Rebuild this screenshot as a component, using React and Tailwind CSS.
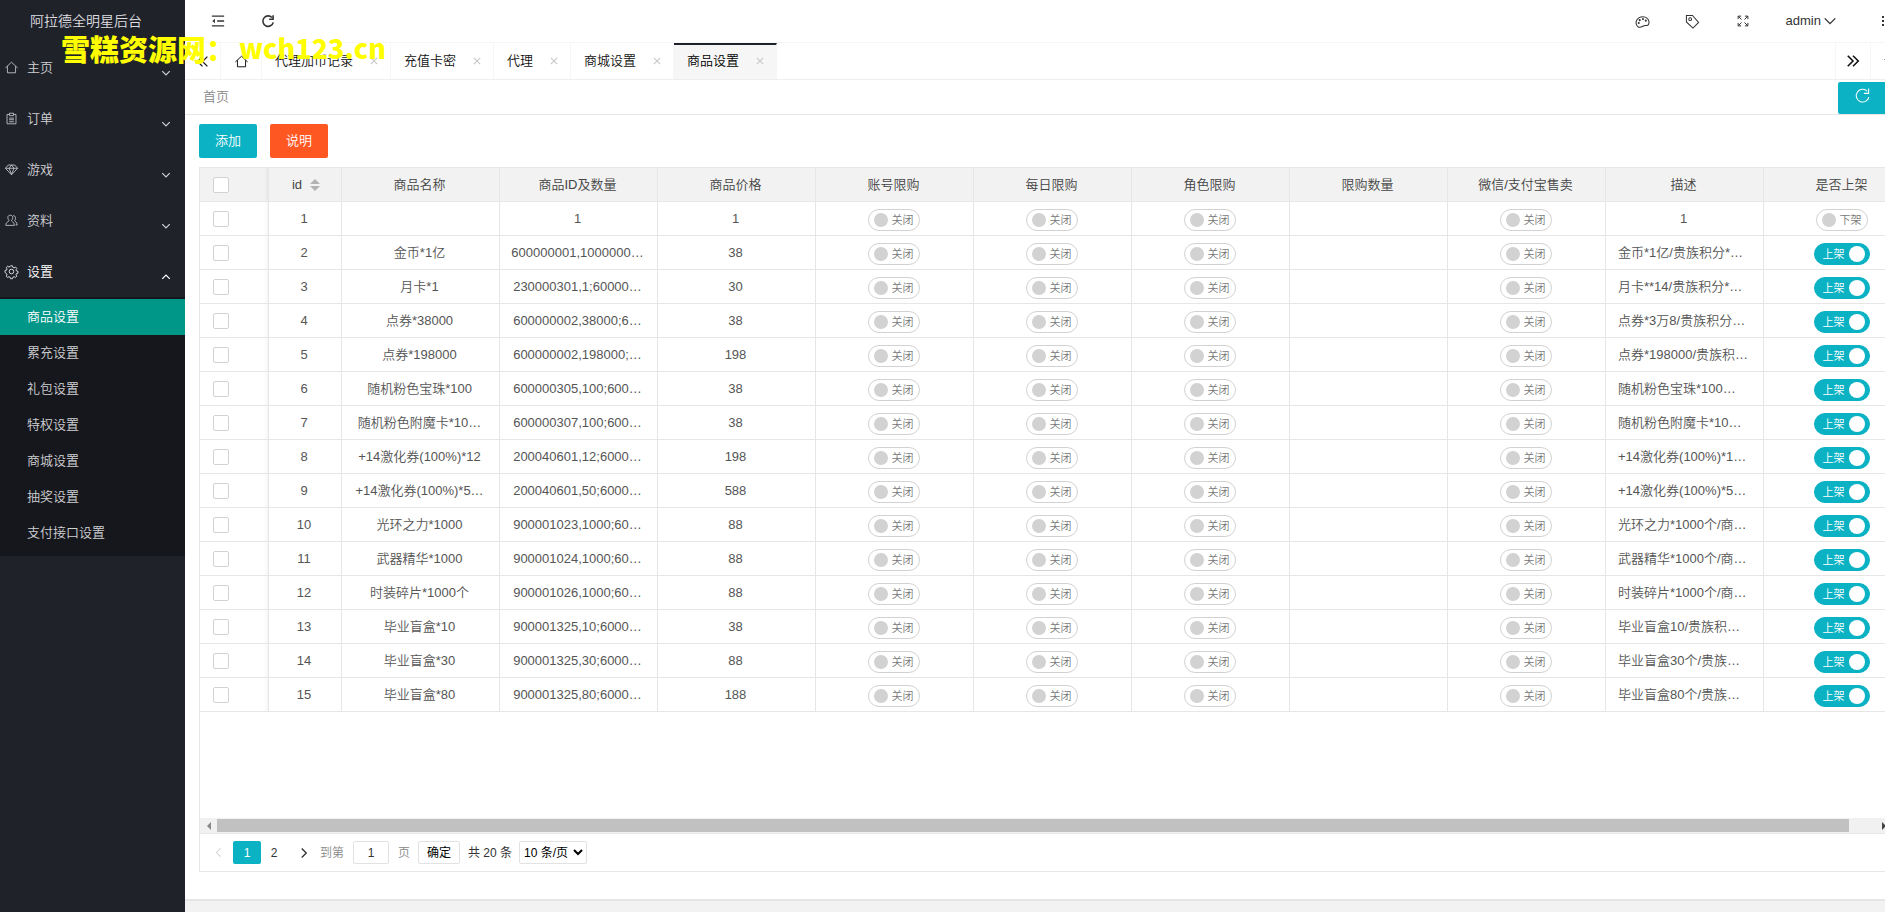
import { useState } from 'react';

const menu = [
  { label: '主页', icon: 'home' },
  { label: '订单', icon: 'order' },
  { label: '游戏', icon: 'gem' },
  { label: '资料', icon: 'users' },
  { label: '设置', icon: 'gear', open: true },
];

const subMenu = ['商品设置', '累充设置', '礼包设置', '特权设置', '商城设置', '抽奖设置', '支付接口设置'];

const tabs = ['代理加币记录', '充值卡密', '代理', '商城设置', '商品设置'];

const columns = [
  '商品名称', '商品ID及数量', '商品价格', '账号限购', '每日限购',
  '角色限购', '限购数量', '微信/支付宝售卖', '描述', '是否上架',
];

const goods = [
  { name: '', items: '1', price: 1, desc: '1', online: false },
  { name: '金币*1亿', items: '600000001,1000000…', price: 38, desc: '金币*1亿/贵族积分*…', online: true },
  { name: '月卡*1', items: '230000301,1;60000…', price: 30, desc: '月卡**14/贵族积分*…', online: true },
  { name: '点券*38000', items: '600000002,38000;6…', price: 38, desc: '点券*3万8/贵族积分…', online: true },
  { name: '点券*198000', items: '600000002,198000;…', price: 198, desc: '点券*198000/贵族积…', online: true },
  { name: '随机粉色宝珠*100', items: '600000305,100;600…', price: 38, desc: '随机粉色宝珠*100…', online: true },
  { name: '随机粉色附魔卡*10…', items: '600000307,100;600…', price: 38, desc: '随机粉色附魔卡*10…', online: true },
  { name: '+14激化券(100%)*12', items: '200040601,12;6000…', price: 198, desc: '+14激化券(100%)*1…', online: true },
  { name: '+14激化券(100%)*5…', items: '200040601,50;6000…', price: 588, desc: '+14激化券(100%)*5…', online: true },
  { name: '光环之力*1000', items: '900001023,1000;60…', price: 88, desc: '光环之力*1000个/商…', online: true },
  { name: '武器精华*1000', items: '900001024,1000;60…', price: 88, desc: '武器精华*1000个/商…', online: true },
  { name: '时装碎片*1000个', items: '900001026,1000;60…', price: 88, desc: '时装碎片*1000个/商…', online: true },
  { name: '毕业盲盒*10', items: '900001325,10;6000…', price: 38, desc: '毕业盲盒10/贵族积…', online: true },
  { name: '毕业盲盒*30', items: '900001325,30;6000…', price: 88, desc: '毕业盲盒30个/贵族…', online: true },
  { name: '毕业盲盒*80', items: '900001325,80;6000…', price: 188, desc: '毕业盲盒80个/贵族…', online: true },
];

const icons = {
  home: <path d="M.5 8.500 8 1.500l7.500 7M3 6.500v8h10v-8" />,
  order: <path d="M5 3H2.500v11.500h11V3H11M5.500 1.500h5v3h-5zM5 7.500h6M5 9.500h6M5 12h6" />,
  gem: <path d="M4 2.500h8L15.500 6.500 8 14.500.5 6.500zM.5 6.500h15M5 6.500 8 14l3-7.500M5 6.500l3-4 3 4" />,
  users: <path d="M6.500 1.500c-4 0-3.500 4.500-1.500 6.500 0 1.500-4 1.500-4 6h10.500c0-4.500-3.500-4.500-3.500-6 2-2 2.500-6.500-1.500-6.500zM10 2c3.500 0 3.500 4 2 6 0 1.500 3 1.500 3 5.500h-2" />,
  gear: (
    <>
      <circle cx="8" cy="8" r="2.800" />
      <path d="M6.800 1h2.400l.5 1.900 1.500.6 1.700-1 1.600 1.700-1 1.700.6 1.400 1.900.5v2.300l-1.900.5-.6 1.500 1 1.700-1.700 1.600-1.600-1-1.500.6-.5 1.900H6.800l-.5-1.900-1.500-.6-1.700 1-1.600-1.700 1-1.600-.6-1.500L0 9.200V6.800l1.900-.5.6-1.500-1-1.700 1.700-1.600 1.600 1 1.500-.6z" />
    </>
  ),
  down: <path d="m2 5 6 6 6-6" />,
  up: <path d="m2 11 6-6 6 6" />,
  left: <path d="M11 2 5 8l6 6" />,
  right: <path d="m5 2 6 6-6 6" />,
  first: <path d="M8 2 2 8l6 6M14 2 8 8l6 6" />,
  last: <path d="m2 2 6 6-6 6M8 2l6 6-6 6" />,
  close: <path d="m3 3 10 10M13 3 3 13" />,
  fold: (
    <>
      <path d="M1 2.500h14M7 8h8M1 13.500h14" />
      <path d="M4.500 5.500v5L1.500 8z" fill="currentColor" stroke="none" />
    </>
  ),
  reload: <path d="M14 9.500A6 6 0 1 1 12.500 4M13.800 1.500v4.500H9.300" />,
  palette: (
    <>
      <path d="M3 13.500c-4-4-1-10.500 5.500-10.500 5 0 7.500 4.500 6 8-1 2.500-3.500.5-5 1.500-1.500.8-4.500 3-6.500 1z" />
      <path d="M4 9.500v.1M5 6.500v.1M8.500 5.300v.1M11.500 7v.1" strokeWidth="2.200" strokeLinecap="round" />
    </>
  ),
  tag: (
    <>
      <path d="M1.500 1.500h6.500l6.500 7.500-6 6-7-6.500z" />
      <circle cx="5.500" cy="5.500" r="1.500" />
    </>
  ),
  full: <path d="M1.500 5.500v-4h4M1.500 1.500l4.500 4.500M10.500 1.500h4v4M14.500 1.500 10 6M1.500 10.500v4h4M1.500 14.500 6 10M14.500 10.500v4h-4M14.500 14.500 10 10" />,
};

const Icon = ({ name, size = 13, width = 1.2, className = '' }) => (
  <svg
    viewBox="0 0 16 16"
    width={size}
    height={size}
    fill="none"
    stroke="currentColor"
    strokeWidth={width}
    aria-hidden="true"
    className={`shrink-0 overflow-visible ${className}`}
  >
    {icons[name]}
  </svg>
);

const IconButton = ({ name, label, size, width, className = '' }) => (
  <button type="button" aria-label={label} className={`flex items-center justify-center ${className}`}>
    <Icon name={name} size={size} width={width} />
  </button>
);

const Switch = ({ label, on, off, defaultChecked = false }) => {
  const [checked, setChecked] = useState(defaultChecked);
  return (
    <label
      className={`relative mt-[3px] inline-flex h-[22px] cursor-pointer items-center rounded-full border align-middle text-[11px] ${
        checked
          ? 'w-14 justify-end gap-1 border-[#0bb2c4] bg-[#0bb2c4] pr-1 text-white'
          : 'w-[52px] gap-1 border-[#d2d2d2] bg-white pl-[5px] text-[#777]'
      }`}
    >
      <input
        type="checkbox"
        role="switch"
        aria-label={label}
        checked={checked}
        onChange={(e) => setChecked(e.target.checked)}
        className="sr-only"
      />
      {checked && <span>{on}</span>}
      <i className={`rounded-full ${checked ? 'size-4 bg-white' : 'size-[14px] bg-[#d2d2d2]'}`} />
      {!checked && <span>{off}</span>}
    </label>
  );
};

const Checkbox = ({ label }) => (
  <input
    type="checkbox"
    aria-label={label}
    className="block size-4 appearance-none rounded-xs border border-[#d2d2d2] bg-white checked:bg-[#0bb2c4]"
  />
);

const Sidebar = () => (
  <aside className="w-[185px] shrink-0 bg-[#20222a] text-[13px] text-[#cfd0d2]">
    <div className="flex h-[42px] items-center pl-[30px] text-sm text-[#dedee0]">阿拉德全明星后台</div>
    <nav>
      <ul>
        {menu.map((item) => (
          <li key={item.label}>
            <a href="#" className={`flex h-[51px] items-center pr-[14px] pl-[5px] ${item.open ? 'text-white' : ''}`}>
              <Icon name={item.icon} width={1} />
              <span className="ml-[9px] flex-1">{item.label}</span>
              <Icon name={item.open ? 'up' : 'down'} size={10} width={2} className="mt-[10px]" />
            </a>
            {item.open && (
              <ul className="bg-[#16171d] pt-[2px] pb-[5px]">
                {subMenu.map((sub, i) => (
                  <li key={sub}>
                    <a
                      href="#"
                      className={`flex h-9 items-center pl-[27px] ${i === 0 ? 'bg-[#009688] text-white' : 'text-[#cfd0d2]'}`}
                    >
                      {sub}
                    </a>
                  </li>
                ))}
              </ul>
            )}
          </li>
        ))}
      </ul>
    </nav>
  </aside>
);

const Header = () => (
  <header className="flex h-[43px] items-center border-b border-[#f6f6f6] pl-2 text-[13px] text-[#333]">
    <IconButton name="fold" label="侧边伸缩" size={14} width={1.5} className="w-[50px]" />
    <IconButton name="reload" label="刷新" size={14} width={1.8} className="w-[50px]" />
    <div className="flex-1" />
    <IconButton name="palette" label="主题" size={15} width={1.1} className="w-[50px]" />
    <IconButton name="tag" label="便签" size={15} width={1.1} className="w-[50px]" />
    <IconButton name="full" label="全屏" size={12} width={1.3} className="w-[50px]" />
    <button type="button" className="ml-[18px] flex items-center gap-[2px]">
      admin
      <Icon name="down" size={14} width={1.6} />
    </button>
    <button type="button" aria-label="更多" className="mr-[20px] ml-[42px] flex w-2 flex-col items-center gap-[2px]">
      <i className="size-[2px] bg-[#333]" />
      <i className="size-[2px] bg-[#333]" />
      <i className="size-[2px] bg-[#333]" />
    </button>
  </header>
);

const TabBar = () => (
  <div className="flex h-[37px] border-b border-[#eee] text-[13px] text-[#111]">
    <IconButton name="first" label="向左" width={1.5} className="w-9 border-r border-[#f6f6f6]" />
    <IconButton name="home" label="主页" width={1.2} className="w-[41px] border-r border-[#f6f6f6]" />
    {tabs.map((tab) => {
      const active = tab === '商品设置';
      return (
        <div
          key={tab}
          className={`flex items-center border-r border-[#f6f6f6] pr-[11px] pl-[13px] ${
            active ? 'border-t-2 border-t-[#20222a] bg-[#f6f6f6] pb-[2px] text-black' : ''
          }`}
        >
          <a href="#">{tab}</a>
          <button type="button" aria-label={`关闭${tab}`} className="ml-4 text-[#c8c8c8]">
            <Icon name="close" size={10} width={1.8} />
          </button>
        </div>
      );
    })}
    <div className="flex-1" />
    <IconButton name="last" label="向右" size={14} width={1.8} className="w-9 border-x border-[#f6f6f6]" />
    <button type="button" aria-label="标签操作" className="flex w-9 items-center justify-center">
      <i className="size-0 border-x-[5px] border-t-[5px] border-x-transparent border-t-[#333]" />
    </button>
  </div>
);

const GoodsTable = () => (
  <table className="w-[1722px] table-fixed border-separate border-spacing-0 text-center text-[13px] whitespace-nowrap text-[#555]">
    <colgroup>
      <col className="w-[69px]" />
      <col className="w-[73px]" />
      {columns.map((col) => <col key={col} className="w-[158px]" />)}
    </colgroup>
    <thead className="bg-[#f2f2f2] text-[#444] [&_th]:border-r [&_th]:border-b [&_th]:border-[#e6e6e6] [&_th]:pr-[2px] [&_th]:font-[350]">
      <tr>
        <th className="h-[34px] pl-[13px] shadow-[inset_-4px_0_4px_-3px_rgba(0,0,0,0.06)]">
          <Checkbox label="全选" />
        </th>
        <th>
          <button type="button" className="ml-1 inline-flex items-center gap-2">
            id
            <span className="flex flex-col gap-[2px]">
              <i className="size-0 border-x-[5px] border-b-[5px] border-x-transparent border-b-[#b2b2b2]" />
              <i className="size-0 border-x-[5px] border-t-[5px] border-x-transparent border-t-[#b2b2b2]" />
            </span>
          </button>
        </th>
        {columns.map((col) => <th key={col}>{col}</th>)}
      </tr>
    </thead>
    <tbody className="[&_td]:h-[34px] [&_td]:border-r [&_td]:border-b [&_td]:border-[#e6e6e6] [&_td]:pr-[2px] [&_td]:leading-4">
      {goods.map((row, i) => (
        <tr key={row.items + row.name}>
          <td className="pl-[13px] shadow-[inset_-4px_0_4px_-3px_rgba(0,0,0,0.05)]">
            <Checkbox label={`选择 ${i + 1}`} />
          </td>
          <td>{i + 1}</td>
          <td>{row.name}</td>
          <td>{row.items}</td>
          <td>{row.price}</td>
          <td><Switch label="账号限购" on="开启" off="关闭" /></td>
          <td><Switch label="每日限购" on="开启" off="关闭" /></td>
          <td><Switch label="角色限购" on="开启" off="关闭" /></td>
          <td />
          <td><Switch label="微信/支付宝售卖" on="开启" off="关闭" /></td>
          <td className={row.desc.length > 1 ? 'pl-3 text-left' : ''}>{row.desc}</td>
          <td><Switch label="是否上架" on="上架" off="下架" defaultChecked={row.online} /></td>
        </tr>
      ))}
    </tbody>
  </table>
);

const Scrollbar = () => (
  <div className="flex h-[15px] items-center bg-[#f1f1f1]">
    <span className="flex w-[17px] justify-center">
      <i className="size-0 border-y-4 border-r-4 border-y-transparent border-r-[#888]" />
    </span>
    <div className="flex-1 pr-[26px]">
      <div className="h-[13px] bg-[#c1c1c1]" />
    </div>
    <span className="flex w-[17px] justify-center">
      <i className="size-0 border-y-4 border-l-4 border-y-transparent border-l-[#444]" />
    </span>
  </div>
);

const Pager = () => (
  <div className="flex h-[38px] items-center border-t border-[#e6e6e6] pl-[3px] text-xs text-[#333]">
    <IconButton name="left" label="上一页" size={11} width={1.5} className="w-[30px] text-[#d2d2d2]" />
    <button type="button" className="h-[23px] w-7 rounded-xs bg-[#0bb2c4] text-white">1</button>
    <button type="button" className="h-[23px] w-[26px]">2</button>
    <IconButton name="right" label="下一页" size={12} width={1.8} className="w-[33px]" />
    <label htmlFor="page" className="text-[#888]">到第</label>
    <input
      id="page"
      defaultValue="1"
      className="mx-[9px] h-[23px] w-9 rounded-xs border border-[#e2e2e2] text-center text-[#333]"
    />
    <span className="text-[#888]">页</span>
    <button type="button" className="ml-2 h-[23px] w-[42px] rounded-xs border border-[#e2e2e2] font-normal text-black">确定</button>
    <span className="ml-2 font-normal">共 20 条</span>
    <select aria-label="每页条数" className="ml-[7px] h-[23px] w-[68px] rounded-xs border border-[#e2e2e2] bg-white font-normal text-black">
      <option>10 条/页</option>
      <option>20 条/页</option>
      <option>30 条/页</option>
    </select>
  </div>
);

const App = () => (
  <div className="relative flex h-screen overflow-hidden bg-white font-['Liberation_Sans','Noto_Sans_CJK_SC',sans-serif] font-[350]">
    <Sidebar />
    <div className="min-w-0 flex-1 overflow-hidden">
      {/* the page runs a little past the right edge of the window */}
      <div className="flex h-full w-[calc(100%+22px)] flex-col">
        <Header />
        <TabBar />
        <div className="flex h-[35px] items-center justify-between border-b border-[#e6e6e6] pr-[19px] pl-[18px]">
          <a href="#" className="text-[13px] text-[#888]">首页</a>
          <IconButton name="reload" label="刷新页面" size={17} width={1} className="h-8 w-[50px] self-end rounded-xs bg-[#0bb2c4] pr-[2px] pb-[6px] text-white" />
        </div>
        <main className="flex min-h-0 flex-1 flex-col px-[14px] pt-[9px] pb-[27px] text-[13px]">
          <div className="mb-[9px] flex gap-[13px]">
            <button type="button" className="h-[34px] w-[58px] rounded-xs bg-[#0bb2c4] text-white">添加</button>
            <button type="button" className="h-[34px] w-[58px] rounded-xs bg-[#ff5722] text-white">说明</button>
          </div>
          <div className="flex min-h-0 flex-1 flex-col border border-[#e6e6e6]">
            <div className="min-h-0 flex-1 overflow-hidden">
              <GoodsTable />
            </div>
            <Scrollbar />
            <Pager />
          </div>
        </main>
        <footer className="h-[13px] border-t-2 border-[#e6e6e6] bg-[#f2f2f2]" />
      </div>
    </div>
    <div className="pointer-events-none absolute top-[28px] left-[61px] flex items-center font-['Noto_Sans_CJK_SC',sans-serif] text-[29px] leading-10 font-black whitespace-nowrap text-[#ffff00]">
      雪糕资源网：<span className="ml-1 text-[27px]">wch123.cn</span>
    </div>
  </div>
);

export default App;
